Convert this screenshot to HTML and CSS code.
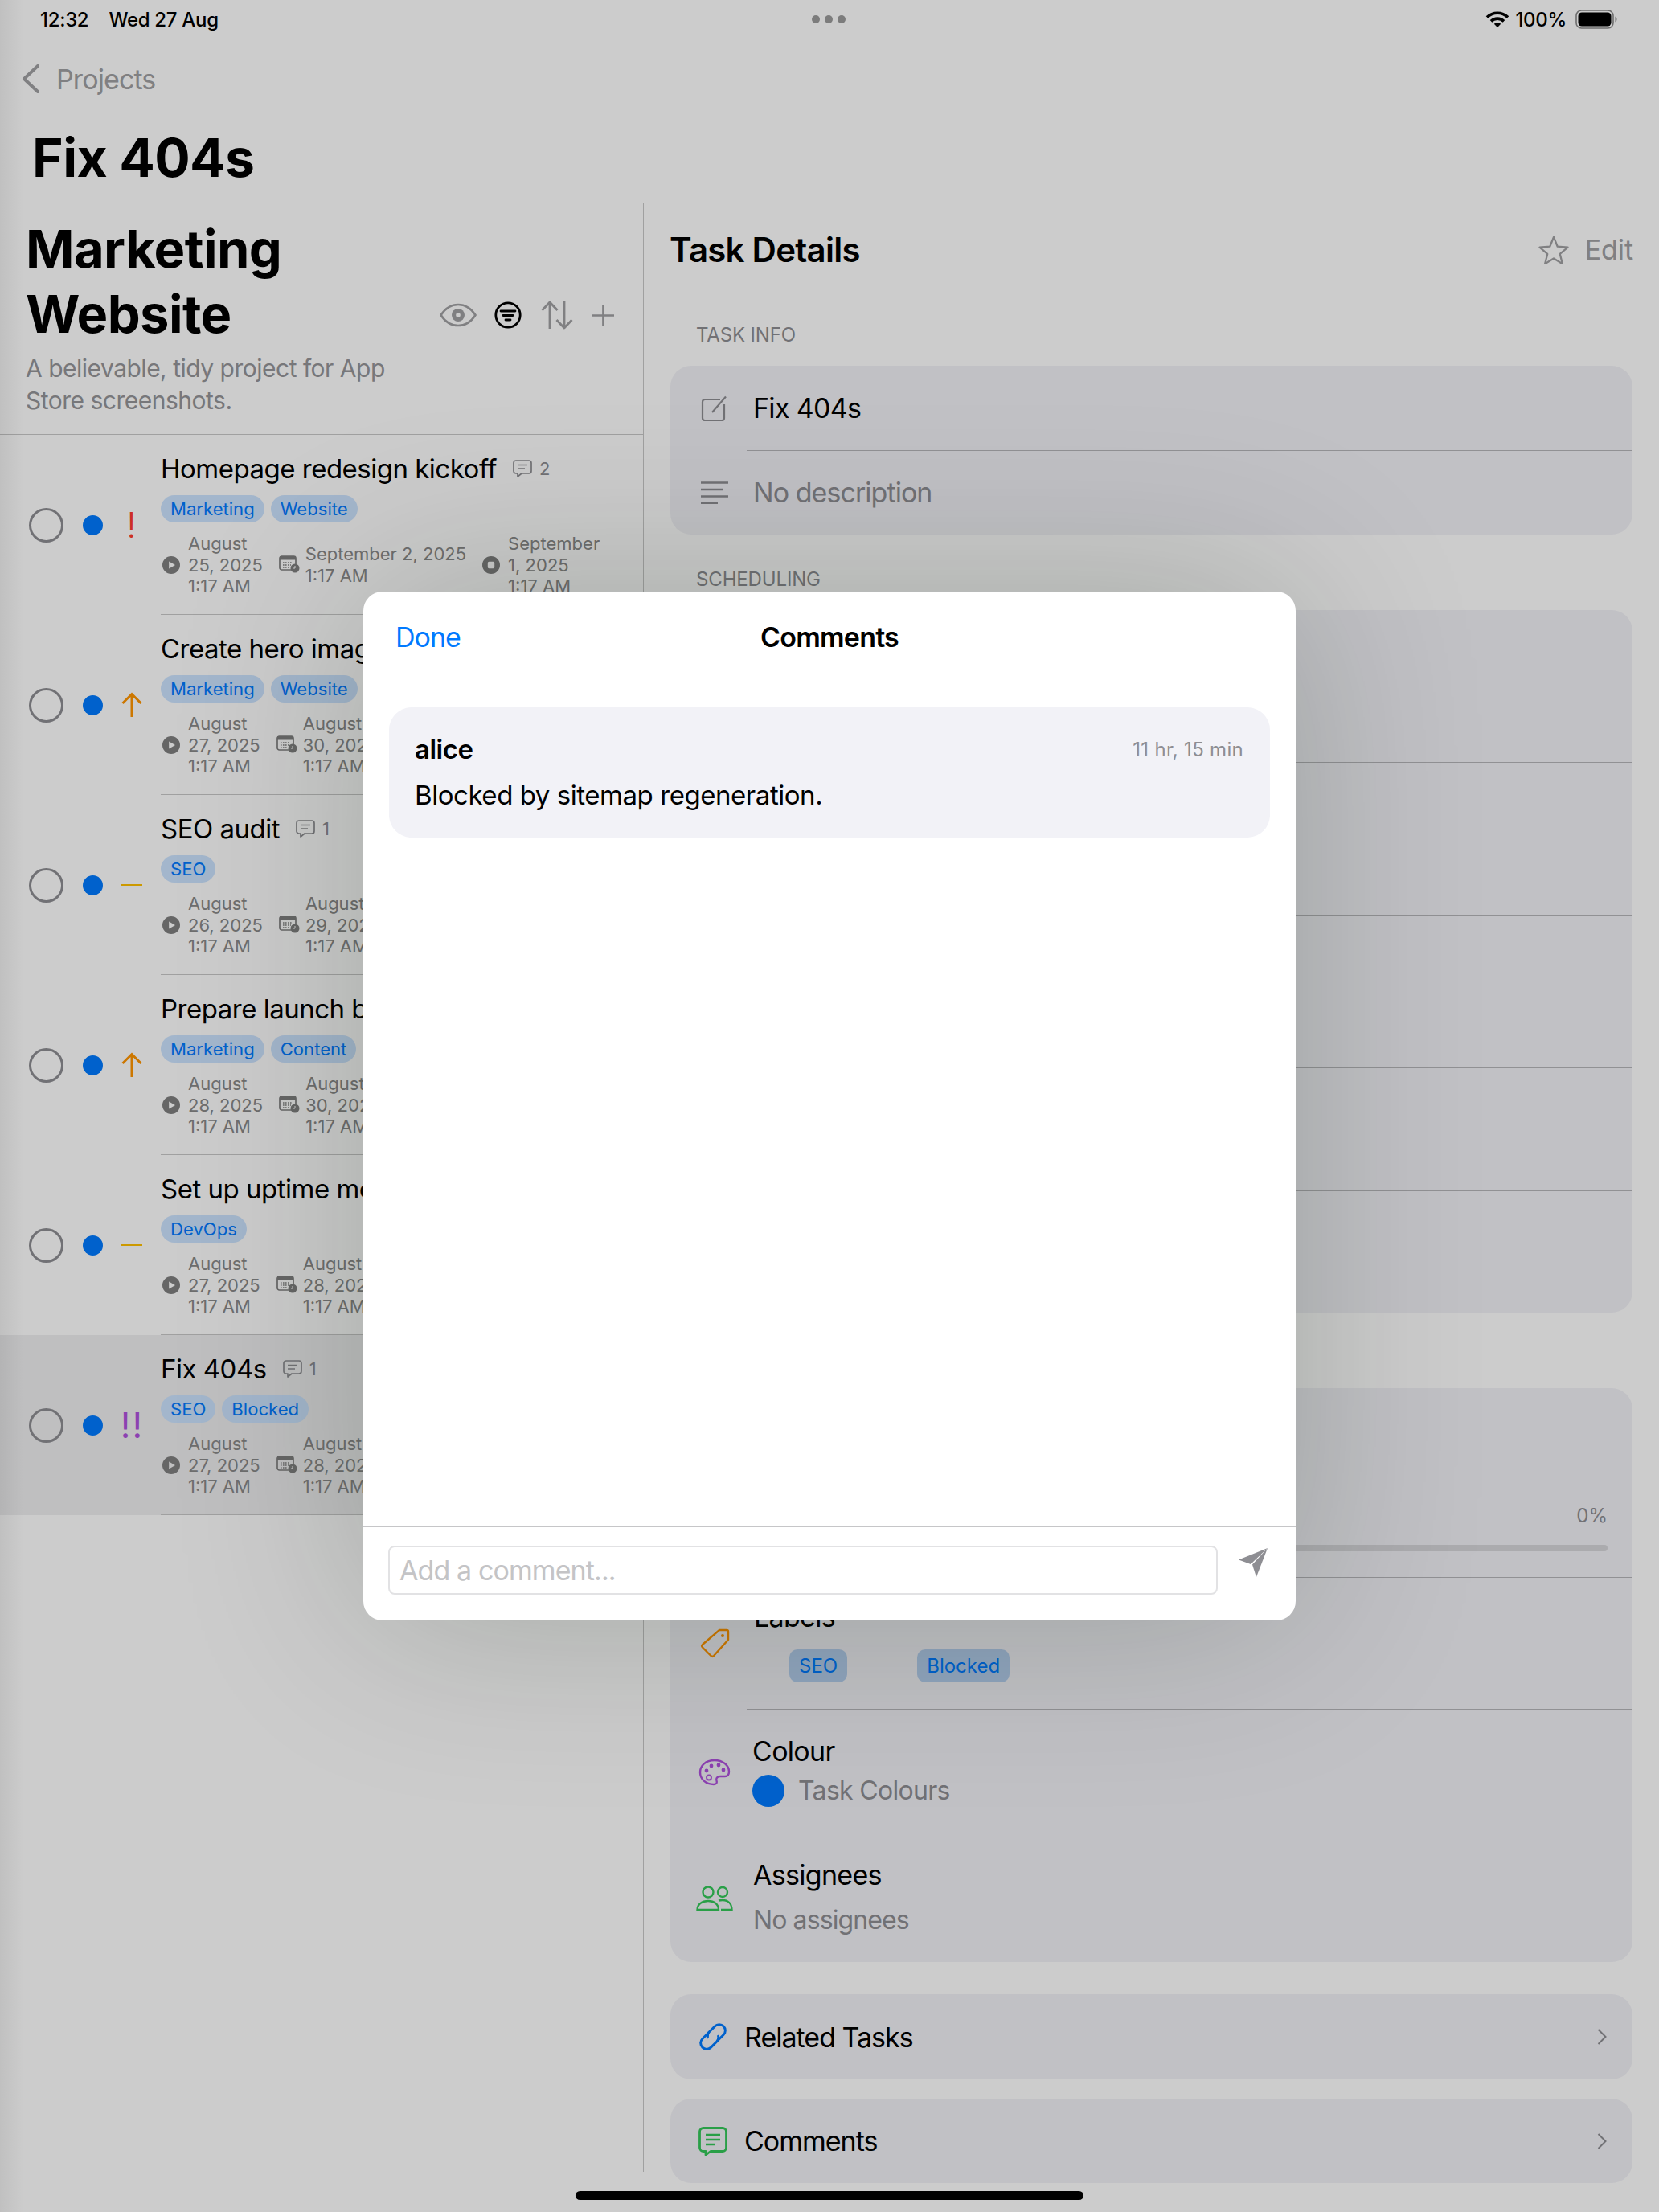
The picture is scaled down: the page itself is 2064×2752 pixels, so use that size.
FILE: index.html
```html
<!DOCTYPE html>
<html lang="en">
<head>
<meta charset="utf-8">
<title>Fix 404s</title>
<link rel="stylesheet" href="styles.css">
</head>
<body>
<svg class="sprite" xmlns="http://www.w3.org/2000/svg">
  <symbol id="i-play" viewBox="0 0 22 22"><path fill="currentColor" fill-rule="evenodd" d="M11 0a11 11 0 1 0 0 22a11 11 0 1 0 0-22zM8.2 6.4L16 11L8.2 15.6z"/></symbol>
  <symbol id="i-stop" viewBox="0 0 22 22"><path fill="currentColor" fill-rule="evenodd" d="M11 0a11 11 0 1 0 0 22a11 11 0 1 0 0-22zM8.500 6.800h5a1.700 1.700 0 0 1 1.700 1.700v5a1.700 1.700 0 0 1-1.700 1.700h-5a1.700 1.700 0 0 1-1.700-1.700v-5a1.700 1.700 0 0 1 1.700-1.700z"/></symbol>
  <symbol id="i-cal" viewBox="0 0 26 22"><rect x="1" y="1" width="20" height="17" rx="2.5" fill="none" stroke="currentColor" stroke-width="1.7"/><rect x="1" y="1" width="20" height="4.5" fill="currentColor"/><path stroke="currentColor" stroke-width="1.5" stroke-dasharray="1.6 1.4" d="M5 9h12M5 12h10M5 15h8" fill="none"/><circle cx="20" cy="16" r="5.5" fill="currentColor"/><path d="M20 13v3h-2" fill="none" stroke="#fff" stroke-width="1"/></symbol>
  <symbol id="i-bubble" viewBox="0 0 24 24"><path fill="none" stroke="currentColor" stroke-width="1.7" stroke-linejoin="round" d="M4 2h16a3 3 0 0 1 3 3v10a3 3 0 0 1-3 3h-9l-5 4v-4H4a3 3 0 0 1-3-3V5a3 3 0 0 1 3-3z"/><path fill="none" stroke="currentColor" stroke-width="1.5" d="M6 7.5h12M6 12h9"/></symbol>
  <symbol id="i-up" viewBox="0 0 26 32"><path fill="none" stroke="currentColor" stroke-width="3" d="M13 31V3M1.5 14L13 2.5L24.5 14"/></symbol>
</svg>

<div class="page">
  <header class="status">
    <div class="status-left"><span>12:32</span><span>Wed 27 Aug</span></div>
    <div class="status-dots"><i></i><i></i><i></i></div>
    <div class="status-right">
      <svg class="wifi" viewBox="0 0 30 22"><path fill="none" stroke="#000" stroke-width="3.6" d="M2 8.6a18.4 18.4 0 0 1 26 0M7 13.4a11.4 11.4 0 0 1 16 0"/><path d="M10.8 16.7a6 6 0 0 1 8.4 0L15 21z"/></svg>
      <span>100%</span>
      <svg class="battery" viewBox="0 0 52 24"><rect x="1" y="1" width="46" height="22" rx="6.5" fill="none" stroke="#8a8a8a" stroke-width="1.6"/><rect x="3.5" y="3.5" width="41" height="17" rx="4.5"/><path d="M49.5 8.5a4 4 0 0 1 0 7z" fill="#8a8a8a"/></svg>
    </div>
  </header>

  <nav class="nav">
    <svg class="nav-back" viewBox="0 0 22 36"><path fill="none" stroke="currentColor" stroke-width="4" stroke-linecap="round" stroke-linejoin="round" d="M20 2L3 18l17 16"/></svg>
    <span>Projects</span>
  </nav>
  <h1 class="page-title">Fix 404s</h1>

  <div class="split">
    <aside class="list-pane">
      <div class="project-head">
        <div class="project-top">
          <h2 class="project-name">Marketing Website</h2>
          <div class="tools">
            <svg class="tool-eye" viewBox="0 0 46 30"><path fill="none" stroke="currentColor" stroke-width="2.6" d="M1.5 15C7 6.5 14 2 23 2s16 4.500 21.500 13C39 23.500 32 28 23 28S7 23.500 1.500 15z"/><circle cx="23" cy="15" r="8" fill="currentColor"/><circle cx="23" cy="15" r="2.800" fill="#fff"/></svg>
            <svg class="tool-filter" viewBox="0 0 34 34"><circle cx="17" cy="17" r="15.200" fill="none" stroke="#000" stroke-width="2.800"/><path fill="none" stroke="#000" stroke-width="2.800" stroke-linecap="round" d="M8 12h18M11 17.500h12M14 23h6"/></svg>
            <svg class="tool-sort" viewBox="0 0 40 36"><path fill="none" stroke="currentColor" stroke-width="2.800" stroke-linejoin="round" d="M11 35V2M1.500 12L11 2l9.500 10M29 1v33M19.500 24L29 34l9.500-10"/></svg>
            <svg class="tool-plus" viewBox="0 0 28 28"><path fill="none" stroke="currentColor" stroke-width="2.800" d="M14 0v28M0 14h28"/></svg>
          </div>
        </div>
        <p class="project-desc">A believable, tidy project for App Store screenshots.</p>
      </div>

      <div class="task">
        <div class="lead"><span class="check"></span><span class="dot"></span><span class="prio prio-red">!</span></div>
        <div class="body">
          <div class="title"><span>Homepage redesign kickoff</span><span class="count"><svg><use href="#i-bubble"/></svg>2</span></div>
          <div class="chips"><span class="chip">Marketing</span><span class="chip">Website</span></div>
          <div class="dates">
            <div class="date"><svg class="ic-c"><use href="#i-play"/></svg><span>August<br>25, 2025<br>1:17 AM</span></div>
            <div class="date date-cal"><svg class="ic-cal"><use href="#i-cal"/></svg><span>September 2, 2025<br>1:17 AM</span></div>
            <div class="date"><svg class="ic-c"><use href="#i-stop"/></svg><span>September<br>1, 2025<br>1:17 AM</span></div>
          </div>
        </div>
      </div>

      <div class="task">
        <div class="lead"><span class="check"></span><span class="dot"></span><span class="prio"><svg class="arrow"><use href="#i-up"/></svg></span></div>
        <div class="body">
          <div class="title"><span>Create hero images</span></div>
          <div class="chips"><span class="chip">Marketing</span><span class="chip">Website</span></div>
          <div class="dates">
            <div class="date"><svg class="ic-c"><use href="#i-play"/></svg><span>August<br>27, 2025<br>1:17 AM</span></div>
            <div class="date date-cal"><svg class="ic-cal"><use href="#i-cal"/></svg><span>August<br>30, 2025<br>1:17 AM</span></div>
          </div>
        </div>
      </div>

      <div class="task">
        <div class="lead"><span class="check"></span><span class="dot"></span><span class="prio"><i class="dash"></i></span></div>
        <div class="body">
          <div class="title"><span>SEO audit</span><span class="count"><svg><use href="#i-bubble"/></svg>1</span></div>
          <div class="chips"><span class="chip">SEO</span></div>
          <div class="dates">
            <div class="date"><svg class="ic-c"><use href="#i-play"/></svg><span>August<br>26, 2025<br>1:17 AM</span></div>
            <div class="date date-cal"><svg class="ic-cal"><use href="#i-cal"/></svg><span>August<br>29, 2025<br>1:17 AM</span></div>
          </div>
        </div>
      </div>

      <div class="task">
        <div class="lead"><span class="check"></span><span class="dot"></span><span class="prio"><svg class="arrow"><use href="#i-up"/></svg></span></div>
        <div class="body">
          <div class="title"><span>Prepare launch blog</span></div>
          <div class="chips"><span class="chip">Marketing</span><span class="chip">Content</span></div>
          <div class="dates">
            <div class="date"><svg class="ic-c"><use href="#i-play"/></svg><span>August<br>28, 2025<br>1:17 AM</span></div>
            <div class="date date-cal"><svg class="ic-cal"><use href="#i-cal"/></svg><span>August<br>30, 2025<br>1:17 AM</span></div>
          </div>
        </div>
      </div>

      <div class="task">
        <div class="lead"><span class="check"></span><span class="dot"></span><span class="prio"><i class="dash"></i></span></div>
        <div class="body">
          <div class="title"><span>Set up uptime monitoring</span></div>
          <div class="chips"><span class="chip">DevOps</span></div>
          <div class="dates">
            <div class="date"><svg class="ic-c"><use href="#i-play"/></svg><span>August<br>27, 2025<br>1:17 AM</span></div>
            <div class="date date-cal"><svg class="ic-cal"><use href="#i-cal"/></svg><span>August<br>28, 2025<br>1:17 AM</span></div>
          </div>
        </div>
      </div>

      <div class="task task-selected">
        <div class="lead"><span class="check"></span><span class="dot"></span><span class="prio prio-purple">!!</span></div>
        <div class="body">
          <div class="title"><span>Fix 404s</span><span class="count"><svg><use href="#i-bubble"/></svg>1</span></div>
          <div class="chips"><span class="chip">SEO</span><span class="chip">Blocked</span></div>
          <div class="dates">
            <div class="date"><svg class="ic-c"><use href="#i-play"/></svg><span>August<br>27, 2025<br>1:17 AM</span></div>
            <div class="date date-cal"><svg class="ic-cal"><use href="#i-cal"/></svg><span>August<br>28, 2025<br>1:17 AM</span></div>
          </div>
        </div>
      </div>
    </aside>

    <main class="detail-pane">
      <div class="detail-head">
        <h2>Task Details</h2>
        <div class="detail-actions">
          <svg class="star" viewBox="0 0 40 38"><path fill="none" stroke="currentColor" stroke-width="2.400" stroke-linejoin="round" d="M20 2l5 12.500 13.500 1-10.300 8.700 3.300 13-11.500-7.200-11.500 7.200 3.300-13L1.500 15.500l13.500-1z"/></svg>
          <span>Edit</span>
        </div>
      </div>
      <div class="detail-body">
        <div class="section-label">TASK INFO</div>
        <section class="card">
          <div class="row row-105">
            <svg class="ri ri-edit" viewBox="0 0 34 32"><path fill="none" stroke="#8e8e93" stroke-width="2.200" d="M24 5H5a3 3 0 0 0-3 3v20a3 3 0 0 0 3 3h21a3 3 0 0 0 3-3V11"/><path fill="none" stroke="#8e8e93" stroke-width="2.200" d="M14 21L31 1.500"/></svg>
            <div class="rtext">Fix 404s</div>
          </div>
          <div class="row row-105 row-last">
            <svg class="ri ri-lines" viewBox="0 0 34 28"><path fill="none" stroke="#8e8e93" stroke-width="2.400" d="M0 1.500h34M0 10h27M0 18.500h34M0 27h21"/></svg>
            <div class="rtext rtext-muted rtext-desc">No description</div>
          </div>
        </section>

        <div class="section-label section-label-2">SCHEDULING</div>
        <section class="card card-gap">
          <div class="row row-189"></div>
          <div class="row row-190"></div>
          <div class="row row-190"></div>
          <div class="row row-153"></div>
          <div class="row row-152 row-last"></div>
        </section>

        <section class="card card-status">
          <div class="row row-105"></div>
          <div class="row row-130 row-progress">
            <div class="pct">0%</div>
            <div class="bar"></div>
          </div>
          <div class="row row-164 row-labels">
            <svg class="ri ri-tag" viewBox="0 0 38 38"><path fill="none" stroke="#ff9500" stroke-width="2.400" stroke-linejoin="round" d="M24 3h9a2 2 0 0 1 2 2v10L17 35a2.500 2.500 0 0 1-3.500 0L3 24.500a2.500 2.500 0 0 1 0-3.500z"/><circle cx="28" cy="10" r="2" fill="#ff9500"/></svg>
            <div class="rstack">
              <div class="rtext rtext-labels">Labels</div>
              <div class="label-chips"><span class="lchip">SEO</span><span class="lchip">Blocked</span></div>
            </div>
          </div>
          <div class="row row-154 row-colour">
            <svg class="ri ri-palette" viewBox="0 0 40 34"><path fill="none" stroke="#af52de" stroke-width="2.400" d="M20 2C9 2 2 8.500 2 17s7 15 17 15c3.500 0 4.500-2 3.500-4.500S23 22 27 22h6c3.500 0 5-2.500 5-6C38 8 30 2 20 2z"/><circle cx="10" cy="15" r="2.400" fill="#af52de"/><circle cx="16" cy="9" r="2.400" fill="#af52de"/><circle cx="25" cy="8" r="2.400" fill="#af52de"/><circle cx="31" cy="14" r="2.400" fill="#af52de"/><circle cx="13" cy="23.500" r="3" fill="none" stroke="#af52de" stroke-width="1.800"/></svg>
            <div class="rstack">
              <div class="rtext">Colour</div>
              <div class="colour-line"><span class="swatch"></span><span class="rtext-muted sub-small sub-colour">Task Colours</span></div>
            </div>
          </div>
          <div class="row row-161 row-last row-assign">
            <svg class="ri ri-people" viewBox="0 0 46 32"><g fill="none" stroke="#34c759" stroke-width="2.400"><circle cx="15" cy="8" r="6.500"/><circle cx="33" cy="8" r="6"/><path d="M1.500 30c0-7 6-11 13.500-11s13 4 13 11z"/><path d="M28 18.500c1.500-.4 3.300-.5 5-.5 6.500 0 11.500 4 11.500 12H31"/></g></svg>
            <div class="rstack">
              <div class="rtext">Assignees</div>
              <div class="rtext-muted sub-small assign-sub">No assignees</div>
            </div>
          </div>
        </section>

        <section class="card card-link card-link-1">
          <svg class="li-link" viewBox="2.500 2.500 31 31"><g transform="rotate(-45 18 18)" fill="none" stroke="#007aff" stroke-width="2.500" stroke-linecap="round"><path d="M18 11.500H8.500a6.500 6.500 0 0 0 0 13H17a6.500 6.500 0 0 0 5.500-3"/><path d="M18 24.500h9.500a6.500 6.500 0 0 0 0-13H19a6.500 6.500 0 0 0-5.500 3"/></g></svg>
          <span class="link-text">Related Tasks</span>
          <svg class="chev" viewBox="0 0 12 20"><path fill="none" stroke="#8e8e93" stroke-width="2" d="M1.500 1l9 9-9 9"/></svg>
        </section>
        <section class="card card-link card-link-2">
          <svg class="li-link" viewBox="0 0 36 36"><path fill="none" stroke="#34c759" stroke-width="2.800" stroke-linejoin="round" d="M6 1.500h24a4.500 4.500 0 0 1 4.500 4.500v20a4.500 4.500 0 0 1-4.500 4.500H15L9 35v-4.500H6A4.500 4.500 0 0 1 1.500 26V6A4.500 4.500 0 0 1 6 1.500z"/><path fill="none" stroke="#34c759" stroke-width="2.600" d="M9 10h18M9 16h18M9 22h11"/></svg>
          <span class="link-text">Comments</span>
          <svg class="chev" viewBox="0 0 12 20"><path fill="none" stroke="#8e8e93" stroke-width="2" d="M1.500 1l9 9-9 9"/></svg>
        </section>
      </div>
    </main>
  </div>

  <div class="scrim"></div>

  <div class="modal">
    <div class="modal-head">
      <span class="done">Done</span>
      <span class="modal-title">Comments</span>
      <span></span>
    </div>
    <div class="modal-body">
      <article class="comment">
        <div class="comment-top"><span class="author">alice</span><span class="when">11 hr, 15 min</span></div>
        <div class="comment-text">Blocked by sitemap regeneration.</div>
      </article>
    </div>
    <div class="composer">
      <div class="input">Add a comment...</div>
      <svg class="send" viewBox="0 0 36 36"><path fill="#8e8e93" d="M36 0L22 36l-5-15.500z"/><path fill="#8e8e93" d="M36 0L0 14.500l15 5.500z"/></svg>
    </div>
  </div>

  <div class="home-bar"></div>
</div>
</body>
</html>
```

FILE: styles.css
```css
* { box-sizing: border-box; }
html, body { margin: 0; padding: 0; }
body { font-family: Inter, "Liberation Sans", sans-serif; color: #000; background: #fff; }
.sprite { position: absolute; width: 0; height: 0; overflow: hidden; }

.page { position: relative; width: 2064px; height: 2752px; overflow: hidden; display: flex; flex-direction: column; background: #fff; }

/* status bar */
.status { height: 48px; padding: 0 52px 0 50px; display: grid; grid-template-columns: 1fr auto 1fr; align-items: center; font-size: 24px; font-weight: 500; letter-spacing: -0.3px; }
.status-left { display: flex; gap: 25px; }
.status-dots { display: flex; gap: 6px; }
.status-dots i { width: 10px; height: 10px; border-radius: 50%; background: #9c9c9c; }
.status-right { display: flex; align-items: center; justify-content: flex-end; gap: 7px; }
.wifi { width: 30px; height: 22px; }
.battery { width: 52px; height: 24px; margin-left: 4px; }

/* nav */
.nav { height: 100px; padding-left: 27px; display: flex; align-items: center; gap: 21px; color: #a0a0a3; font-size: 34px; letter-spacing: -0.9px; }
.nav-back { width: 22px; height: 36px; }
.page-title { margin: 0; height: 104px; padding: 15px 0 0 40px; font-size: 66px; line-height: 66px; font-weight: 700; letter-spacing: -0.6px; }

.split { flex: 1; display: flex; min-height: 0; height: 2450px; max-height: 2450px; }

/* left pane */
.list-pane { width: 801px; border-right: 1px solid #c8c8c8; flex: none; }
.project-head { height: 289px; padding: 17px 36px 0 32px; border-bottom: 1px solid #c8c8c8; }
.project-top { display: flex; justify-content: space-between; align-items: flex-end; }
.project-name { margin: 0; width: 520px; font-size: 65px; line-height: 81px; font-weight: 700; letter-spacing: -0.6px; }
.tools { display: flex; align-items: center; margin-bottom: 21px; color: #a0a0a3; }
.tools svg { display: block; }
.tool-eye { width: 46px; height: 30px; }
.tool-filter { width: 34px; height: 34px; margin-left: 22px; }
.tool-sort { width: 40px; height: 36px; margin-left: 24px; }
.tool-plus { width: 27px; height: 27px; margin-left: 24px; }
.project-desc { margin: 7px 0 0; width: 500px; font-size: 30px; line-height: 40px; color: #959599; letter-spacing: -0.5px; }

.task { height: 224px; display: flex; padding-left: 36px; }
.task-selected { background: #efeff0; }
.lead { width: 164px; flex: none; display: flex; align-items: center; }
.check { width: 43px; height: 43px; border: 3px solid #8e8e93; border-radius: 50%; flex: none; }
.dot { width: 25px; height: 25px; margin-left: 24px; border-radius: 50%; background: #007aff; flex: none; }
.prio { width: 27px; margin-left: 22px; display: flex; justify-content: center; font-size: 44px; line-height: 44px; font-weight: 400; color: #ff9500; letter-spacing: 2px; }
.prio-red { color: #ff3b30; font-weight: 300; padding-left: 2px; }
.prio-purple { color: #af52de; font-weight: 400; padding-left: 2px; }
.arrow { width: 26px; height: 32px; margin-top: -1px; }
.dash { display: block; width: 27px; height: 2px; background: #ffc000; }

.body { flex: 1; min-width: 0; padding-top: 22px; border-bottom: 1px solid #c8c8c8; overflow: hidden; }
.title { height: 40px; display: flex; align-items: center; font-size: 33px; line-height: 40px; letter-spacing: -0.5px; white-space: nowrap; }
.count { display: inline-flex; align-items: center; gap: 9px; margin-left: 20px; color: #8e8e93; font-size: 22px; letter-spacing: 0; }
.count svg { width: 24px; height: 24px; }
.chips { display: flex; gap: 8px; margin-top: 13px; }
.chip { height: 34px; padding: 0 12px; border-radius: 17px; background: #cce4ff; color: #007aff; font-size: 22.1px; line-height: 34px; }
.dates { display: flex; align-items: center; gap: 20px; margin-top: 13px; padding-left: 2px; font-size: 22px; line-height: 26.5px; color: #8a8a8a; white-space: nowrap; }
.date { display: flex; align-items: center; gap: 10px; }
.date-cal { gap: 7px; }
.ic-c { width: 22px; height: 22px; flex: none; color: #808080; }
.ic-cal { width: 26px; height: 22px; flex: none; color: #808080; margin-top: -2px; }

/* right pane */
.detail-pane { flex: 1; min-width: 0; }
.detail-head { height: 118px; padding: 0 32px 0 32px; display: flex; justify-content: space-between; align-items: center; border-bottom: 1px solid #c8c8c8; }
.detail-head h2 { margin: 0; font-size: 42px; font-weight: 600; letter-spacing: -0.75px; }
.detail-actions { display: flex; align-items: center; gap: 20px; font-size: 34px; color: #a0a0a3; letter-spacing: -0.1px; }
.star { width: 38px; height: 36px; }

.detail-body { padding: 0 33px 0 33px; }
.section-label { height: 30px; margin: 32px 0 23px 32px; font-size: 24px; line-height: 30px; color: #8e8e93; letter-spacing: -0.15px; }
.section-label-2 { margin-top: 41px; }
.card { background: #f2f2f7; border-radius: 26px; overflow: hidden; }
.card-status { margin-top: 94px; }
.row { position: relative; display: flex; align-items: center; padding-left: 38px; font-size: 34px; }
.row::after { content: ""; position: absolute; left: 95px; right: 0; bottom: -1px; height: 1px; background: #b6b6ba; }
.row-last::after { display: none; }
.row-105 { height: 105px; }
.row-130 { height: 130px; }
.row-152 { height: 152px; }
.row-153 { height: 153px; }
.row-154 { height: 154px; }
.row-161 { height: 161px; }
.row-164 { height: 164px; }
.row-189 { height: 189px; }
.row-190 { height: 190px; }
.ri { flex: none; display: block; }
.ri-edit { width: 34px; height: 32px; margin-right: 31px; }
.ri-lines { width: 34px; height: 28px; margin-right: 31px; }
.ri-tag { width: 38px; height: 38px; margin-right: 29px; align-self: flex-end; margin-bottom: 63px; margin-left: -1px; }
.ri-palette { width: 40px; height: 34px; margin-right: 27px; margin-left: -3px; margin-top: -5px; }
.ri-people { width: 46px; height: 32px; margin-right: 25px; margin-left: -6px; }
.rtext { line-height: 40px; letter-spacing: -0.7px; }
.rtext-muted { color: #8e8e93; letter-spacing: -0.45px; }
.rtext-desc { letter-spacing: -0.95px; }
.sub-small { font-size: 32px; letter-spacing: -0.9px; }
.sub-colour { letter-spacing: -0.7px; }
.rstack { display: flex; flex-direction: column; }

.row-progress { display: block; padding: 0; }
.pct { position: absolute; right: 31px; top: 39px; font-size: 24px; line-height: 30px; color: #8e8e93; }
.bar { position: absolute; left: 95px; right: 31px; top: 90px; height: 8px; border-radius: 4px; background: #d6d6da; }

.row-labels { align-items: flex-start; }
.row-labels .rstack { padding-top: 30px; }
.rtext-labels { height: 40px; }
.label-chips { display: flex; gap: 87px; margin: 20px 0 0 44px; }
.lchip { height: 41px; padding: 0 12px; border-radius: 10px; background: #b4cfee; color: #007aff; font-size: 24px; line-height: 41px; }

.row-colour { align-items: flex-start; padding-top: 33px; }
.row-colour .ri-palette { margin-top: 29px; }
.colour-line { display: flex; align-items: center; gap: 17px; margin-top: 9px; line-height: 40px; }
.swatch { width: 40px; height: 40px; border-radius: 50%; background: #007aff; }

.row-assign { align-items: flex-start; padding-top: 33px; }
.row-assign .ri-people { margin-top: 33px; }
.assign-sub { margin-top: 16px; line-height: 40px; }

.card-link { display: flex; align-items: center; padding: 0 32px 0 35px; }
.card-link-1 { height: 106px; margin-top: 40px; }
.card-link-2 { height: 105px; margin-top: 24px; }
.li-link { width: 36px; height: 36px; flex: none; margin-right: 21px; }
.link-text { flex: 1; font-size: 34px; letter-spacing: -1px; }
.chev { width: 12px; height: 20px; flex: none; }

/* overlay */
.scrim { position: absolute; inset: 0; background: linear-gradient(90deg, rgba(0,0,0,.06), rgba(0,0,0,0) 30px), rgba(0,0,0,.2); }

.modal { position: absolute; left: 452px; top: 736px; width: 1160px; height: 1280px; display: flex; flex-direction: column; background: #fff; border-radius: 24px; box-shadow: 0 0 240px rgba(0,24,8,.2); }
.modal-head { height: 112px; padding: 0 40px; display: grid; grid-template-columns: 1fr auto 1fr; align-items: center; font-size: 34px; letter-spacing: -1px; }
.done { color: #007aff; }
.modal-title { font-weight: 600; letter-spacing: -0.8px; }
.modal-body { flex: 1; padding: 32px 32px 0; }
.comment { height: 162px; padding: 32px 33px 0 32px; background: #f2f2f7; border-radius: 28px; }
.comment-top { height: 40px; display: flex; justify-content: space-between; align-items: center; }
.author { font-size: 33px; font-weight: 600; letter-spacing: -0.5px; }
.when { font-size: 24px; color: #8e8e93; letter-spacing: 0.3px; }
.comment-text { margin-top: 17px; font-size: 33px; line-height: 40px; letter-spacing: -0.45px; }
.composer { height: 117px; border-top: 1px solid #c6c6c8; padding: 23px 0 0 31px; display: flex; align-items: flex-start; }
.input { width: 1032px; height: 61px; padding-left: 12px; border: 2px solid #e2e2e4; border-radius: 8px; font-size: 34px; line-height: 57px; color: #c4c4c6; letter-spacing: -0.9px; }
.send { width: 36px; height: 36px; margin: 3px 0 0 26px; }

.home-bar { position: absolute; left: 716px; top: 2726px; width: 632px; height: 11px; border-radius: 6px; background: #000; }
```
